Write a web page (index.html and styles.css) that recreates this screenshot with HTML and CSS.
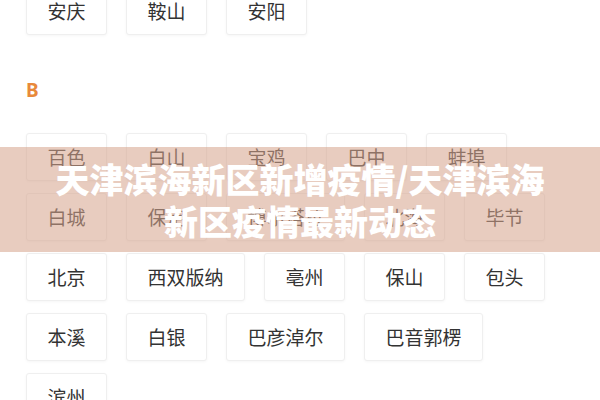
FILE: index.html
```html
<!DOCTYPE html>
<html lang="zh-CN">
<head>
  <meta charset="UTF-8" />
  <meta name="viewport" content="width=device-width, initial-scale=1.0" />
  <title>城市选择</title>
  <link rel="stylesheet" href="styles.css">
</head>
<body>
  <div class="city-list">
    <div class="group group-a">
      <div class="cities">
        <a class="city">安庆</a>
        <a class="city">鞍山</a>
        <a class="city">安阳</a>
      </div>
    </div>

    <div class="group">
      <h3 class="letter">B</h3>
      <div class="cities">
        <a class="city">百色</a>
        <a class="city">白山</a>
        <a class="city">宝鸡</a>
        <a class="city">巴中</a>
        <a class="city">蚌埠</a>
        <a class="city">白城</a>
        <a class="city">保定</a>
        <a class="city">博尔塔拉</a>
        <a class="city">北海</a>
        <a class="city">毕节</a>
        <a class="city">北京</a>
        <a class="city">西双版纳</a>
        <a class="city">亳州</a>
        <a class="city">保山</a>
        <a class="city">包头</a>
        <a class="city">本溪</a>
        <a class="city">白银</a>
        <a class="city">巴彦淖尔</a>
        <a class="city">巴音郭楞</a>
        <a class="city">滨州</a>
      </div>
    </div>
  </div>

  <!-- article title banner -->
  <div class="banner">
    <h1>天津滨海新区新增疫情/天津滨海<br>新区疫情最新动态</h1>
  </div>
</body>
</html>
```

FILE: styles.css
```css
* {
  box-sizing: border-box;
  margin: 0;
  padding: 0;
}

body {
  font-family: "Noto Sans CJK SC", "Noto Sans", sans-serif;
  background: #fff;
  color: #333;
  width: 600px;
  height: 400px;
  overflow: hidden;
  position: relative;
}

.city-list {
  padding: 0 26px;
}

.group-a {
  margin-top: -13px;
}

.letter {
  font-family: "Noto Sans", "Liberation Sans", sans-serif;
  font-size: 19px;
  line-height: 20px;
  font-weight: 700;
  color: #e8893b;
  margin: 45px 0 33px;
}

.cities {
  display: flex;
  flex-wrap: wrap;
  gap: 12px 19px;
}

.city {
  display: block;
  height: 48px;
  line-height: 46px;
  padding: 0 20.5px;
  font-size: 19px;
  color: #333;
  border: 1px solid #efefef;
  border-radius: 3px;
  box-shadow: 0 1px 3px rgba(0, 0, 0, 0.04);
  background: #fff;
}

.banner {
  position: absolute;
  left: 0;
  top: 147px;
  width: 100%;
  height: 105px;
  background: rgba(214, 164, 140, 0.56);
  display: flex;
  align-items: center;
  justify-content: center;
}

.banner h1 {
  font-size: 34px;
  line-height: 42px;
  font-weight: 900;
  color: #fff;
  text-align: center;
}
```
